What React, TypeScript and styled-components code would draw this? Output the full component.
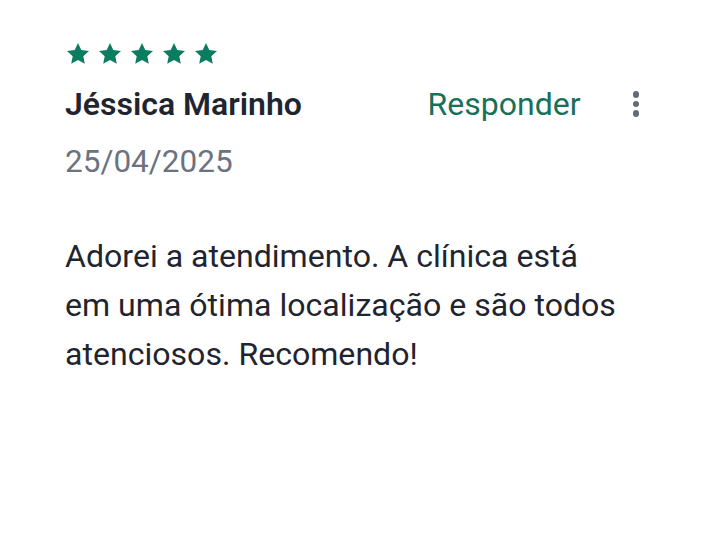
import styled, { createGlobalStyle } from "styled-components";

const GlobalStyle = createGlobalStyle`
  html, body {
    margin: 0;
    padding: 0;
    background: #ffffff;
    font-family: Roboto, "Noto Sans", sans-serif;
  }
`;

const Card = styled.article`
  padding: 42px 81px 0 65px;
  display: flex;
  flex-direction: column;
`;

const Stars = styled.div`
  display: flex;
  gap: 8px;
  margin-left: 1px;
`;

const Header = styled.div`
  display: flex;
  align-items: center;
  justify-content: space-between;
  margin-top: 19px;
`;

const Name = styled.h3`
  margin: 0;
  font-size: 32px;
  font-weight: 600;
  color: #1f2530;
  line-height: 38px;
`;

const Actions = styled.div`
  display: flex;
  align-items: center;
  gap: 52px;
`;

const ReplyButton = styled.button`
  border: none;
  background: none;
  padding: 0;
  font-family: inherit;
  font-size: 32px;
  color: #17705a;
  cursor: pointer;
  line-height: 38px;
`;

const MenuButton = styled.button`
  border: none;
  background: none;
  padding: 0;
  display: flex;
  flex-direction: column;
  gap: 3px;
  cursor: pointer;
`;

const Dot = styled.span`
  width: 6.5px;
  height: 6.5px;
  border-radius: 50%;
  background: #636b78;
`;

const DateText = styled.div`
  margin-top: 19px;
  font-size: 31.5px;
  color: #6b7280;
  line-height: 40px;
`;

const Body = styled.p`
  margin: 50px 0 0;
  font-size: 32.1px;
  line-height: 49px;
  color: #1f2530;
  max-width: 556px;
`;

const Star = () => (
  <svg width="24" height="24" viewBox="0 0 24 24">
    <path
      fill="#0a7d60"
      d="M12 1l3.3 7 7.7.9-5.7 5.3 1.5 7.6L12 18l-6.8 3.8 1.5-7.6L1 8.9 8.7 8z"
    />
  </svg>
);

export default function App() {
  return (
    <>
      <GlobalStyle />
      <Card>
        <Stars>
          {[0, 1, 2, 3, 4].map((i) => (
            <Star key={i} />
          ))}
        </Stars>
        <Header>
          <Name>Jéssica Marinho</Name>
          <Actions>
            <ReplyButton>Responder</ReplyButton>
            <MenuButton aria-label="Mais opções">
              <Dot />
              <Dot />
              <Dot />
            </MenuButton>
          </Actions>
        </Header>
        <DateText>25/04/2025</DateText>
        <Body>
          Adorei a atendimento. A clínica está em uma ótima localização e são
          todos atenciosos. Recomendo!
        </Body>
      </Card>
    </>
  );
}
